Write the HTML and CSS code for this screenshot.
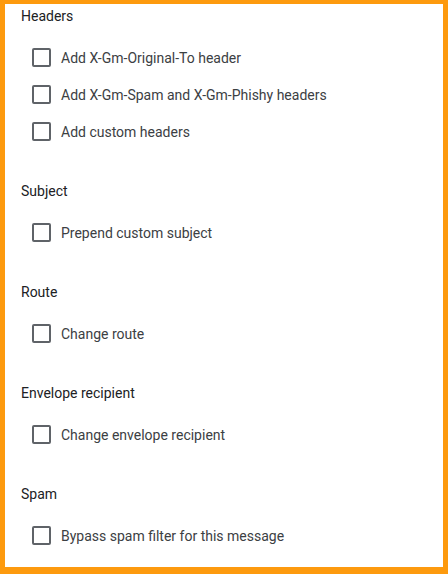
FILE: index.html
```html
<!DOCTYPE html>
<html>
<head>
<meta charset="utf-8">
<link rel="stylesheet" href="styles.css">
</head>
<body>
<div class="frame">
  <section class="group">
    <div class="title">Headers</div>
    <label class="row"><span class="box"></span><span class="label">Add X-Gm-Original-To header</span></label>
    <label class="row"><span class="box"></span><span class="label">Add X-Gm-Spam and X-Gm-Phishy headers</span></label>
    <label class="row"><span class="box"></span><span class="label">Add custom headers</span></label>
  </section>
  <section class="group">
    <div class="title">Subject</div>
    <label class="row"><span class="box"></span><span class="label">Prepend custom subject</span></label>
  </section>
  <section class="group">
    <div class="title">Route</div>
    <label class="row"><span class="box"></span><span class="label">Change route</span></label>
  </section>
  <section class="group">
    <div class="title">Envelope recipient</div>
    <label class="row"><span class="box"></span><span class="label">Change envelope recipient</span></label>
  </section>
  <section class="group">
    <div class="title">Spam</div>
    <label class="row"><span class="box"></span><span class="label">Bypass spam filter for this message</span></label>
  </section>
</div>
</body>
</html>
```

FILE: styles.css
```css
html, body {
  margin: 0;
  padding: 0;
  background: #ffffff;
}
.frame {
  box-sizing: border-box;
  width: 448px;
  height: 574px;
  border-style: solid;
  border-color: #fd9a0e;
  border-width: 4px 5px 7px 5px;
  padding: 2px 0 0 16px;
  background: #ffffff;
  font-family: Roboto, "Noto Sans", sans-serif;
  font-size: 14px;
  color: #202124;
  display: flex;
  flex-direction: column;
  gap: 31px;
}
.group {
  display: flex;
  flex-direction: column;
}
.title {
  line-height: 20px;
  height: 20px;
  margin-bottom: 13px;
  color: #202124;
}
.row {
  display: flex;
  align-items: center;
  height: 37px;
  padding-left: 11px;
  gap: 10px;
}
.box {
  box-sizing: border-box;
  width: 19px;
  height: 19px;
  border: 2px solid #5f6368;
  border-radius: 2px;
  flex: none;
}
.label {
  line-height: 20px;
  color: #3c4043;
}
```
